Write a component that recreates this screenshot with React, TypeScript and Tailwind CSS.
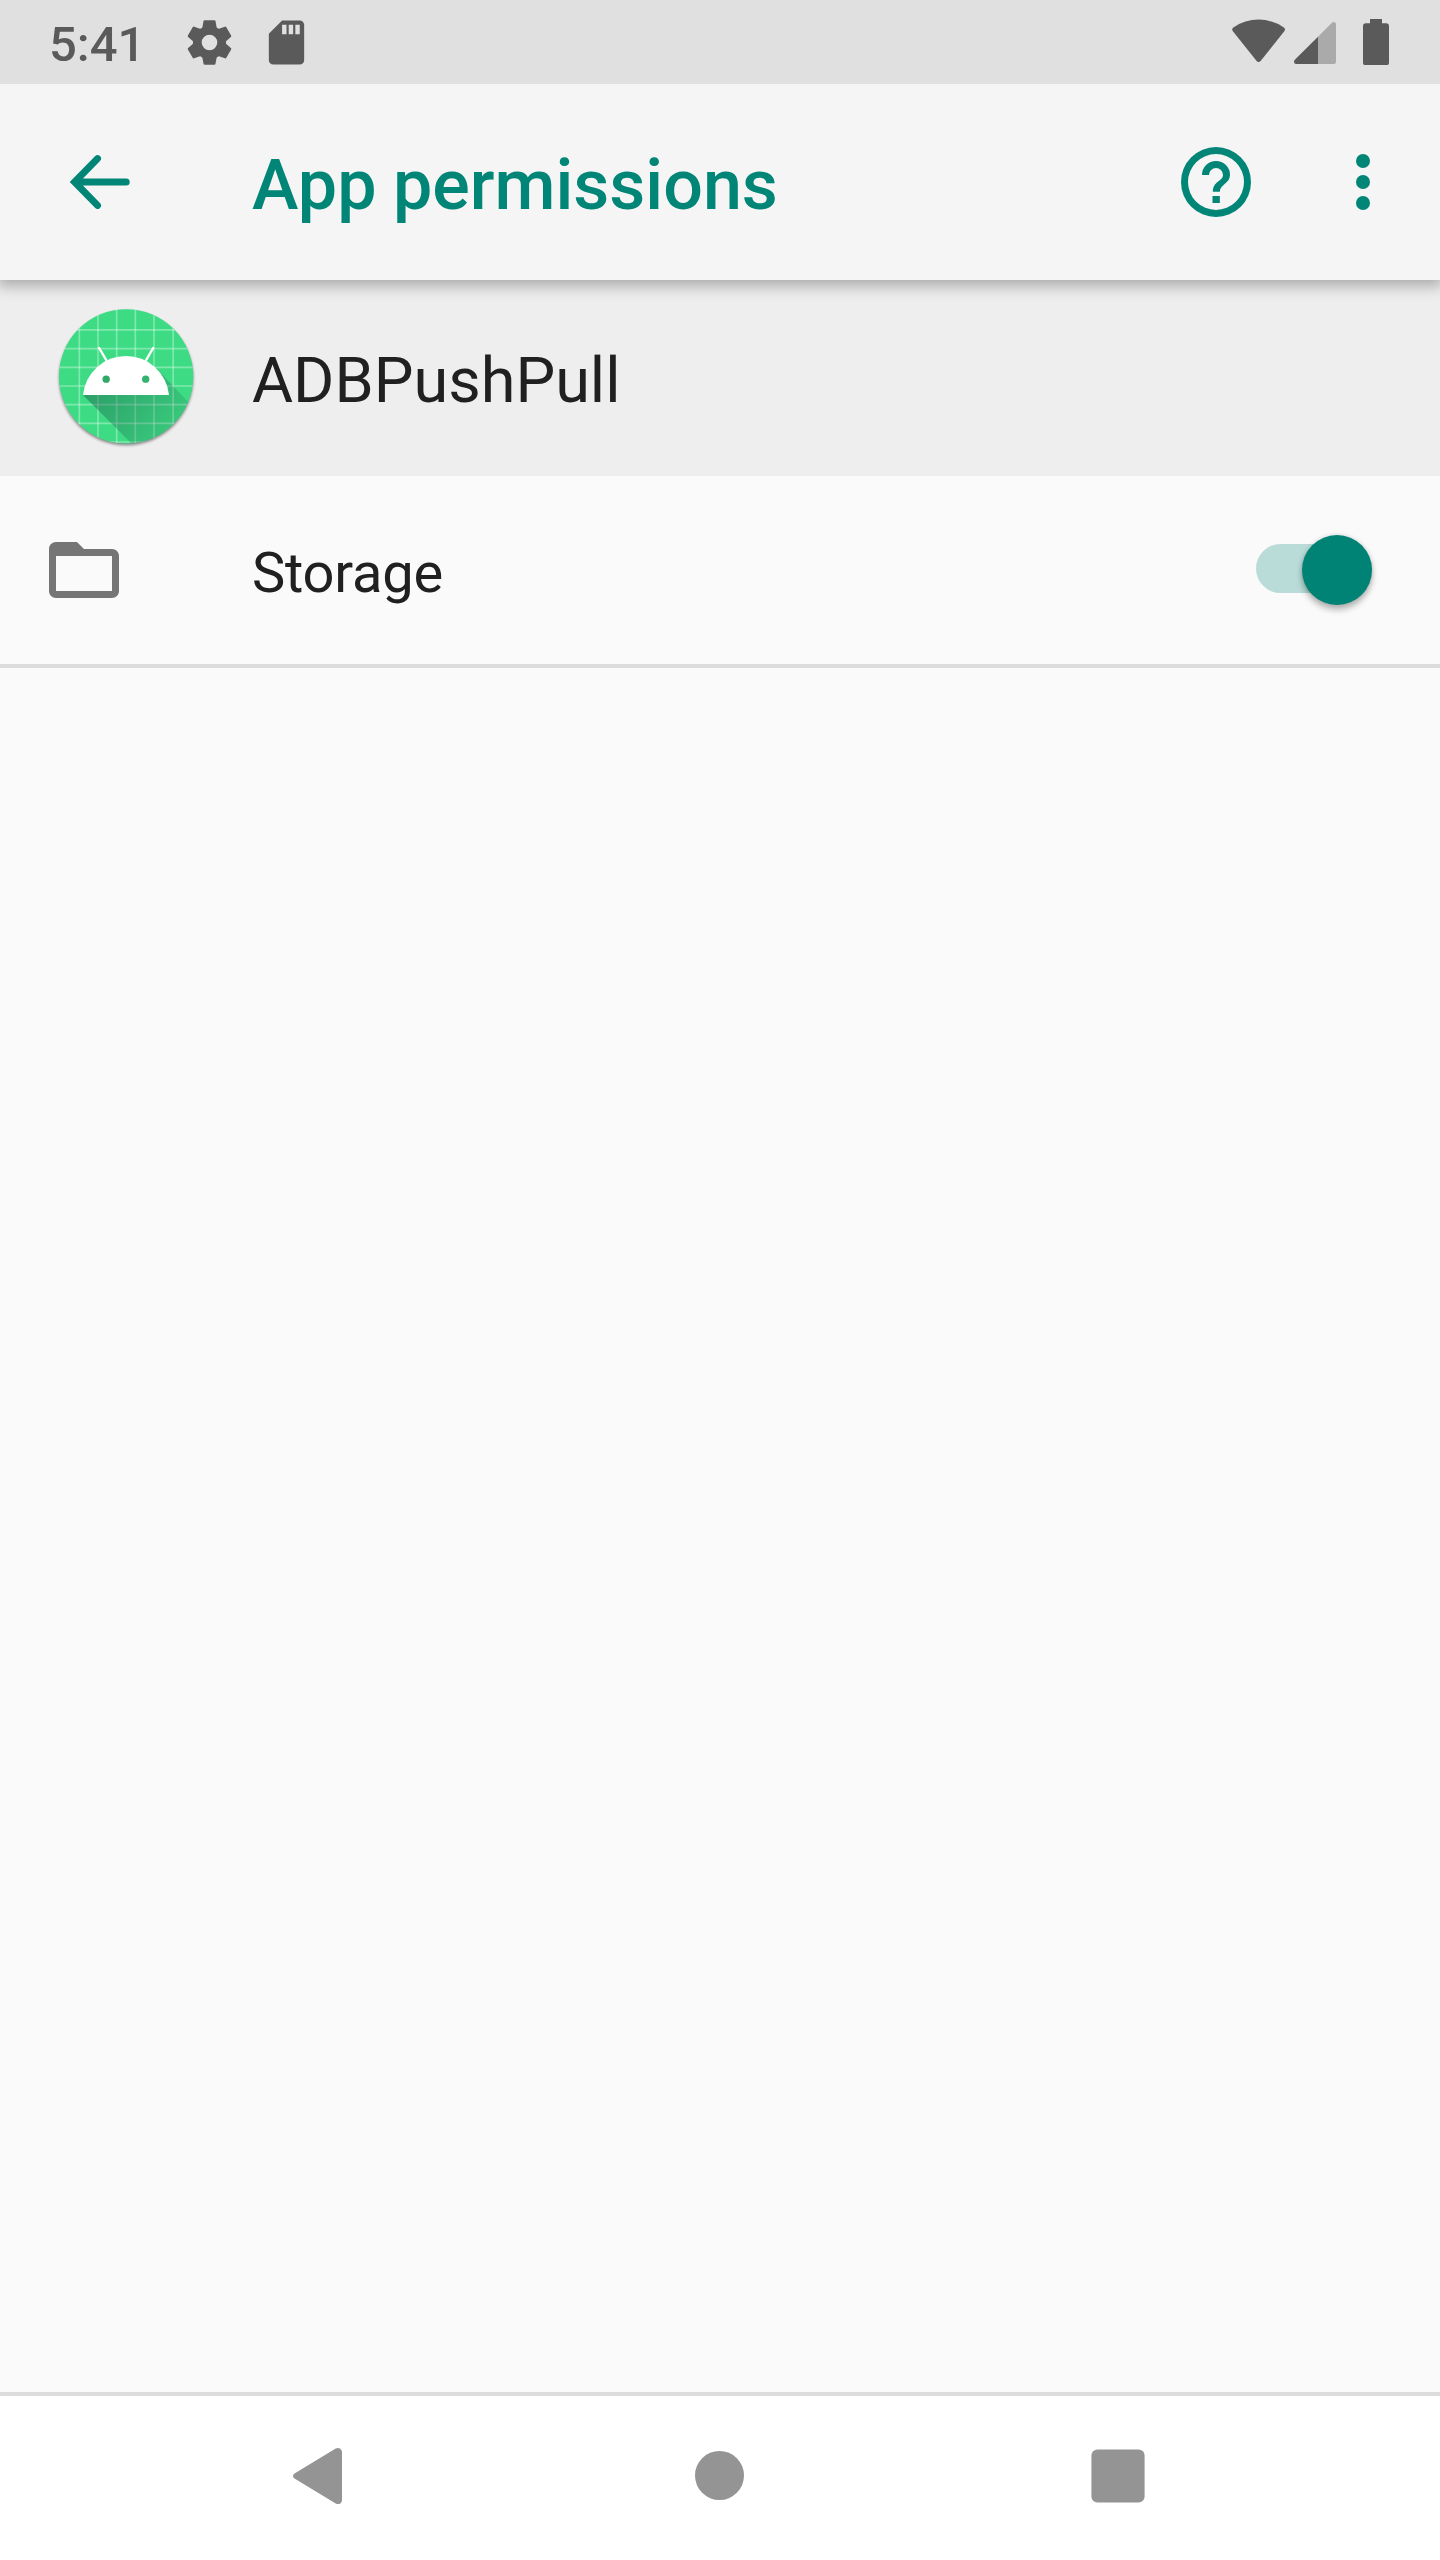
import { useState } from "react";
import type { ReactNode } from "react";

type PermissionRowProps = {
  icon: ReactNode;
  label: string;
  defaultOn?: boolean;
};

const gridX = [118, 174, 230, 286, 342, 399.5];
const gridY = [119.5, 176, 232, 288, 344, 400, 456];
const gearTeeth = [0, 60, 120, 180, 240, 300];

function GearIcon() {
  return (
    <svg width="53" height="53" viewBox="-26.5 -26.5 53 53" className="fill-[#5a5a5a]">
      <circle r="12.2" fill="none" stroke="#5a5a5a" strokeWidth="8.8" />
      {gearTeeth.map((angle) => (
        <path
          key={angle}
          d="M-7.4-13.5-6-21.2Q-5.8-22.2-4.8-22.2H4.8Q5.8-22.2 6-21.2L7.4-13.5Z"
          transform={`rotate(${angle})`}
        />
      ))}
    </svg>
  );
}

function SdCardIcon() {
  return (
    <svg width="53" height="53" viewBox="0 0 24 24" className="fill-[#5a5a5a]">
      <path d="M18 2h-8L4 8v12c0 1.1.9 2 2 2h12c1.1 0 2-.9 2-2V4c0-1.1-.9-2-2-2zm-6 6.3h-2V4h2v4.3zm3 0h-2V4h2v4.3zm3 0h-2V4h2v4.3z" />
    </svg>
  );
}

function StatusBar() {
  return (
    <header className="relative z-20 flex h-[84px] shrink-0 items-center justify-between bg-[#e0e0e0]">
      <div className="flex items-center">
        <span className="w-[134px] pl-[49px] pt-[5px] text-[49px] leading-none font-medium text-[#5a5a5a]">
          5:41
        </span>
        <div className="ml-[49px] flex items-center gap-6">
          <GearIcon />
          <SdCardIcon />
        </div>
      </div>

      {/* Wifi, signal, battery */}
      <svg width="160" height="84" viewBox="0 0 160 84" className="mr-[50px] fill-[#5a5a5a]">
        <path d="M3.1 31.5Q1.2 29 3.4 27.4 15 19.6 28.6 19.6T53.8 27.4Q56 29 54.1 31.5L30.8 60.8Q28.6 63.2 26.4 60.8Z" />
        <path d="M88 36.8V64H66.2Q64 64 64 61.8 64 60.6 64.8 59.8Z" />
        <path
          d="M88 36.8 102.2 22.6Q103.3 21.7 104.4 22 106 22.4 106 24V61.8Q106 64 103.8 64H88Z"
          className="fill-[#aaaaaa]"
        />
        <path d="M140 19H152V23.3H156.6Q159 23.3 159 25.8V62.4Q159 65 156.6 65H135.4Q133 65 133 62.4V25.8Q133 23.3 135.4 23.3H140Z" />
      </svg>
    </header>
  );
}

function Toolbar() {
  return (
    <div className="relative z-10 flex h-[196px] shrink-0 items-center bg-[#f5f5f5] pr-[35px] pl-14 text-[#008577] shadow-[0_3px_14px_3px_rgba(0,0,0,0.29)]">
      <button type="button" aria-label="Back">
        <svg width="84" height="84" viewBox="56 140 84 84" className="fill-none stroke-current">
          <path d="M97.5 158.6 74.6 182 97.5 205.4M76 182H126.2" strokeWidth="7" strokeLinecap="round" />
        </svg>
      </button>
      <h1 className="ml-28 flex-1 pt-1.5 text-[70px] leading-none font-medium [word-spacing:-1px]">
        App permissions
      </h1>
      <button type="button" aria-label="Help">
        <svg width="84" height="84" viewBox="0 0 24 24" className="fill-current">
          <path d="M12 2a10 10 0 1 0 0 20 10 10 0 0 0 0-20zm0 18a8 8 0 1 1 0-16 8 8 0 0 1 0 16z" />
          <path d="M11 16h2.1v2H11zM8 10a4 4 0 0 1 8 0c0 2.4-2.9 2.7-2.9 4.8H11.1C11.1 11.7 14 11.8 14 10a2 2 0 0 0-4 0z" />
        </svg>
      </button>
      <button type="button" aria-label="More options" className="ml-[63px]">
        <svg width="84" height="84" viewBox="0 0 24 24" className="fill-current">
          <circle cx="12" cy="6" r="2" />
          <circle cx="12" cy="12" r="2" />
          <circle cx="12" cy="18" r="2" />
        </svg>
      </button>
    </div>
  );
}

function AppIcon() {
  return (
    <svg width="168" height="168" viewBox="6 12 504 504">
      <defs>
        <clipPath id="disc">
          <circle cx="258.5" cy="259" r="201.5" />
        </clipPath>
        <linearGradient id="fade" gradientUnits="userSpaceOnUse" x1="160" y1="260" x2="400" y2="440">
          <stop offset="0" stopColor="#1b5e4b" stopOpacity="0.5" />
          <stop offset="1" stopColor="#1b5e4b" stopOpacity="0.14" />
        </linearGradient>
        <filter id="drop" x="-10%" y="-10%" width="120%" height="120%">
          <feGaussianBlur stdDeviation="5" />
        </filter>
      </defs>
      <circle cx="258.5" cy="265" r="201" fill="#000" opacity="0.45" filter="url(#drop)" />
      <circle cx="258.5" cy="259" r="201.5" fill="#3ddc84" />
      <g clipPath="url(#disc)">
        <g stroke="#fff" strokeOpacity="0.34" strokeWidth="5">
          {gridX.map((x) => (
            <path key={x} d={`M${x} 50V470`} />
          ))}
          {gridY.map((y) => (
            <path key={y} d={`M50 ${y}H470`} />
          ))}
        </g>
        <path d="M129 315 350 236 480 373V520H334Z" fill="url(#fade)" />
      </g>
      <path d="M129 315A129.6 129.6 0 0 1 387 315Z" fill="#fff" />
      <path d="M177.5 174 201 214M339.5 174 316 214" stroke="#fff" strokeWidth="7" strokeLinecap="round" />
      <circle cx="198.5" cy="267.5" r="11" fill="#30a968" />
      <circle cx="317" cy="267.5" r="11" fill="#34b270" />
    </svg>
  );
}

function AppHeader() {
  return (
    <section className="flex h-[196px] shrink-0 items-center bg-[#eeeeee] pl-[42px]">
      <AppIcon />
      <h2 className="ml-[42px] pt-[5px] text-[63px] leading-none text-[#202020]">ADBPushPull</h2>
    </section>
  );
}

function FolderIcon() {
  return (
    <svg width="84" height="84" viewBox="0 0 24 24" className="fill-[#757575]">
      <path d="M20 6h-8l-2-2H4c-1.1 0-2 .9-2 2v12c0 1.1.9 2 2 2h16c1.1 0 2-.9 2-2V8c0-1.1-.9-2-2-2zm0 12H4V8h16v10z" />
    </svg>
  );
}

function PermissionRow({ icon, label, defaultOn = false }: PermissionRowProps) {
  const [on, setOn] = useState(defaultOn);

  return (
    <div className="flex h-48 shrink-0 items-center border-b-4 border-[#dcdcdc] pr-[68px] pl-[42px]">
      {icon}
      <span className="ml-[126px] flex-1 pt-1.5 text-[56px] leading-none tracking-[-0.2px] text-[#202020]">
        {label}
      </span>
      <button
        type="button"
        role="switch"
        aria-checked={on}
        aria-label={label}
        onClick={() => setOn(!on)}
        className={
          on
            ? "-mt-[3px] flex h-[49px] w-[116px] items-center justify-end rounded-full bg-[#b9dcd8]"
            : "-mt-[3px] flex h-[49px] w-[116px] items-center justify-start rounded-full bg-[#bdbdbd]"
        }
      >
        <span
          className={
            on
              ? "mt-[3px] size-[70px] shrink-0 rounded-full bg-[#008375] shadow-[0_5px_6px_rgba(0,0,0,0.26),0_0_5px_rgba(0,0,0,0.14)]"
              : "mt-[3px] size-[70px] shrink-0 rounded-full bg-[#fafafa] shadow-[0_5px_6px_rgba(0,0,0,0.26),0_0_5px_rgba(0,0,0,0.14)]"
          }
        />
      </button>
    </div>
  );
}

function NavigationBar() {
  return (
    <nav className="flex h-[168px] shrink-0 items-center justify-center gap-[300px] border-t-4 border-[#dcdcdc] bg-white">
      <button type="button" aria-label="Back">
        <svg width="98" height="98" viewBox="0 0 98 98" className="fill-[#949494]">
          <path d="M21.5 44.5 62.7 19.6Q65 18.2 67.3 19.7 69 21 69 23V71Q69 73.5 67.3 74.5 65 75.6 62.7 74.4L21.5 49.5Q20 48.5 20 47T21.5 44.5Z" />
        </svg>
      </button>
      <button type="button" aria-label="Home">
        <svg width="98" height="98" viewBox="0 0 98 98" className="fill-[#949494]">
          <circle cx="48.5" cy="46.5" r="24.5" />
        </svg>
      </button>
      <button type="button" aria-label="Recent apps">
        <svg width="98" height="98" viewBox="0 0 98 98" className="fill-[#949494]">
          <rect x="22.4" y="20.4" width="53.2" height="53.2" rx="6" />
        </svg>
      </button>
    </nav>
  );
}

export default function App() {
  return (
    <div className="flex h-[2560px] w-[1440px] flex-col overflow-hidden bg-[#fafafa] font-[Roboto,sans-serif]">
      <StatusBar />
      <Toolbar />
      <AppHeader />
      <main className="flex-1">
        <PermissionRow icon={<FolderIcon />} label="Storage" defaultOn />
      </main>
      <NavigationBar />
    </div>
  );
}
